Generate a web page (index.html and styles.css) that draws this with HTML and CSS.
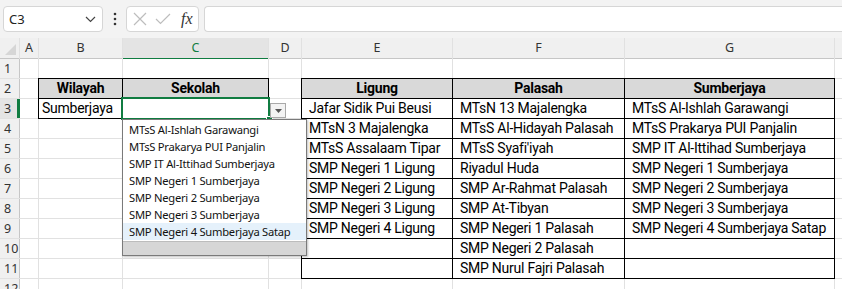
FILE: index.html
```html
<!DOCTYPE html>
<html lang="id">
<head>
    <meta charset="UTF-8">
    <title>Sekolah per Wilayah</title>
    <link rel="stylesheet" href="styles.css">
</head>
<body>
    <div class="toolbar">
        <div class="name-box">
            <span class="name-text">C3</span>
            <svg class="chevron" width="11" height="7" viewBox="0 0 11 7"><path d="M1 1 L5.5 5.5 L10 1" fill="none" stroke="#444" stroke-width="1.2"/></svg>
        </div>
        <svg class="dots" width="4" height="14" viewBox="0 0 4 14"><circle cx="2" cy="2" r="1.3"/><circle cx="2" cy="7" r="1.3"/><circle cx="2" cy="12" r="1.3"/></svg>
        <div class="fx-box">
            <svg width="14" height="14" viewBox="0 0 14 14"><path d="M1 1 L13 13 M13 1 L1 13" stroke="#bdbdbd" stroke-width="1.2" fill="none"/></svg>
            <svg width="16" height="12" viewBox="0 0 16 12"><path d="M1 6 L5.5 10.5 L15 1" stroke="#bdbdbd" stroke-width="1.2" fill="none"/></svg>
            <span class="fx">fx</span>
        </div>
        <div class="formula-input"></div>
    </div>

    <div class="sheet">
        <!-- column headers -->
        <div class="corner"></div>
        <div class="hd">A</div>
        <div class="hd">B</div>
        <div class="hd hd-active">C</div>
        <div class="hd">D</div>
        <div class="hd">E</div>
        <div class="hd">F</div>
        <div class="hd">G</div>
        <div class="hd"></div>

        <!-- row 1 -->
        <div class="rh">1</div>
        <div></div><div></div><div></div><div></div><div></div><div></div><div></div><div></div>

        <!-- row 2 -->
        <div class="rh">2</div>
        <div></div>
        <div class="cell box head">Wilayah</div>
        <div class="cell box head">Sekolah</div>
        <div></div>
        <div class="cell box head">Ligung</div>
        <div class="cell box head">Palasah</div>
        <div class="cell box head">Sumberjaya</div>
        <div></div>

        <!-- row 3 -->
        <div class="rh rh-active">3</div>
        <div></div>
        <div class="cell box">Sumberjaya</div>
        <div class="cell box selected">
            <div class="sel-frame"><span class="fill-handle"></span></div>
            <div class="drop-btn"><svg width="7" height="4" viewBox="0 0 7 4"><path d="M0 0 L7 0 L3.5 4 Z" fill="#555"/></svg></div>
            <div class="dropdown">
                <div class="opt">MTsS Al-Ishlah Garawangi</div>
                <div class="opt">MTsS Prakarya PUI Panjalin</div>
                <div class="opt">SMP IT Al-Ittihad Sumberjaya</div>
                <div class="opt">SMP Negeri 1 Sumberjaya</div>
                <div class="opt">SMP Negeri 2 Sumberjaya</div>
                <div class="opt">SMP Negeri 3 Sumberjaya</div>
                <div class="opt opt-hover">SMP Negeri 4 Sumberjaya Satap</div>
                <div class="drop-foot"></div>
            </div>
        </div>
        <div></div>
        <div class="cell box list">Jafar Sidik Pui Beusi</div>
        <div class="cell box list">MTsN 13 Majalengka</div>
        <div class="cell box list">MTsS Al-Ishlah Garawangi</div>
        <div></div>

        <!-- row 4 -->
        <div class="rh">4</div>
        <div></div><div></div><div></div><div></div>
        <div class="cell box list">MTsN 3 Majalengka</div>
        <div class="cell box list">MTsS Al-Hidayah Palasah</div>
        <div class="cell box list">MTsS Prakarya PUI Panjalin</div>
        <div></div>

        <!-- row 5 -->
        <div class="rh">5</div>
        <div></div><div></div><div></div><div></div>
        <div class="cell box list">MTsS Assalaam Tipar</div>
        <div class="cell box list">MTsS Syafi'iyah</div>
        <div class="cell box list">SMP IT Al-Ittihad Sumberjaya</div>
        <div></div>

        <!-- row 6 -->
        <div class="rh">6</div>
        <div></div><div></div><div></div><div></div>
        <div class="cell box list">SMP Negeri 1 Ligung</div>
        <div class="cell box list">Riyadul Huda</div>
        <div class="cell box list">SMP Negeri 1 Sumberjaya</div>
        <div></div>

        <!-- row 7 -->
        <div class="rh">7</div>
        <div></div><div></div><div></div><div></div>
        <div class="cell box list">SMP Negeri 2 Ligung</div>
        <div class="cell box list">SMP Ar-Rahmat Palasah</div>
        <div class="cell box list">SMP Negeri 2 Sumberjaya</div>
        <div></div>

        <!-- row 8 -->
        <div class="rh">8</div>
        <div></div><div></div><div></div><div></div>
        <div class="cell box list">SMP Negeri 3 Ligung</div>
        <div class="cell box list">SMP At-Tibyan</div>
        <div class="cell box list">SMP Negeri 3 Sumberjaya</div>
        <div></div>

        <!-- row 9 -->
        <div class="rh">9</div>
        <div></div><div></div><div></div><div></div>
        <div class="cell box list">SMP Negeri 4 Ligung</div>
        <div class="cell box list">SMP Negeri 1 Palasah</div>
        <div class="cell box list">SMP Negeri 4 Sumberjaya Satap</div>
        <div></div>

        <!-- row 10 -->
        <div class="rh">10</div>
        <div></div><div></div><div></div><div></div>
        <div class="cell box list"></div>
        <div class="cell box list">SMP Negeri 2 Palasah</div>
        <div class="cell box list"></div>
        <div></div>

        <!-- row 11 -->
        <div class="rh">11</div>
        <div></div><div></div><div></div><div></div>
        <div class="cell box list"></div>
        <div class="cell box list">SMP Nurul Fajri Palasah</div>
        <div class="cell box list"></div>
        <div></div>

        <!-- row 12 -->
        <div class="rh">12</div>
        <div></div><div></div><div></div><div></div><div></div><div></div><div></div><div></div>
    </div>
</body>
</html>
```

FILE: styles.css
```css
* {
    margin: 0;
    padding: 0;
    box-sizing: border-box;
}

html, body {
    height: 100%;
    overflow: hidden;
}

body {
    background-color: #fff;
    font-family: 'Noto Sans', 'Open Sans', sans-serif;
    color: #000;
}

/* formula bar */

.toolbar {
    height: 38px;
    display: flex;
    align-items: center;
    padding: 0 0 0 3px;
    background-color: #f3f3f3;
}

.name-box {
    width: 100px;
    height: 26px;
    background-color: #fff;
    border: 1px solid #d6d6d6;
    border-radius: 4px;
    display: flex;
    align-items: center;
    justify-content: space-between;
    padding: 0 6px 0 5px;
}

.name-text {
    font-size: 13px;
    color: #222;
}

.dots {
    fill: #333;
    margin: 0 9px 0 10px;
}

.fx-box {
    width: 73px;
    height: 26px;
    background-color: #fff;
    border: 1px solid #d6d6d6;
    border-radius: 4px;
    display: flex;
    align-items: center;
    gap: 8px;
    padding-left: 6px;
}

.fx {
    font-family: 'Liberation Serif', serif;
    font-style: italic;
    font-size: 16px;
    color: #333;
    margin-left: 2px;
}

.formula-input {
    flex: 1;
    height: 26px;
    margin-left: 5px;
    background-color: #fff;
    border: 1px solid #d6d6d6;
    border-right: none;
    border-radius: 4px 0 0 4px;
}

/* grid */

.sheet {
    display: grid;
    grid-template-columns: 19px 18px 83px 145px 32px 150px 171px 209px 1fr;
    grid-template-rows: 20px;
    grid-auto-rows: 19px;
    gap: 1px;
    background-color: #e1e1e1;
}

.sheet > div {
    background-color: #fff;
}

.corner {
    background-color: #f0f0f0 !important;
    position: relative;
    box-shadow: 0 1px 0 #c6c6c6;
}

.corner::after {
    content: "";
    position: absolute;
    right: 3px;
    bottom: 3px;
    border-left: 11px solid transparent;
    border-bottom: 11px solid #d6d6d6;
}

.hd {
    background-color: #f0f0f0 !important;
    font-size: 12.5px;
    color: #333;
    text-align: center;
    line-height: 20px;
    box-shadow: 0 1px 0 #c6c6c6;
}

.hd-active {
    background-color: #e4e4e4 !important;
    color: #107c41;
    box-shadow: 0 1px 0 #107c41, 0 2px 0 #107c41;
}

.rh {
    background-color: #f0f0f0 !important;
    font-size: 12.5px;
    color: #333;
    line-height: 19px;
    padding-left: 4px;
    box-shadow: 1px 0 0 #c6c6c6;
}

.rh-active {
    background-color: #e4e4e4 !important;
    box-shadow: 1px 0 0 #107c41;
    border-right: 2px solid #107c41;
}

.cell {
    font-family: Roboto, 'Noto Sans', sans-serif;
    font-size: 14px;
    letter-spacing: -0.25px;
    line-height: 19px;
    white-space: nowrap;
    padding-left: 3px;
}

.box {
    box-shadow: 0 0 0 1px #000;
}

.head {
    background-color: #d9d9d9 !important;
    font-weight: bold;
    text-align: center;
    padding-left: 0;
}

.list {
    padding-left: 7px;
}

/* active cell with validation list */

.selected {
    position: relative;
}

.sel-frame {
    position: absolute;
    left: -2px;
    top: -2px;
    right: -2px;
    bottom: -2px;
    border: 2px solid #107c41;
    z-index: 5;
}

.fill-handle {
    position: absolute;
    right: -5px;
    bottom: -5px;
    width: 7px;
    height: 7px;
    background-color: #107c41;
    border: 1px solid #fff;
}

.drop-btn {
    position: absolute;
    left: calc(100% + 2px);
    top: 4px;
    width: 16px;
    height: 15px;
    background-color: #f3f3f3;
    border: 1px solid #a9a9a9;
    display: flex;
    align-items: center;
    justify-content: center;
    z-index: 5;
}

.dropdown {
    position: absolute;
    left: -1px;
    top: 20px;
    width: 185px;
    height: 137px;
    background-color: #fff;
    border: 1px solid #7a7a7a;
    box-shadow: 1px 1px 2px rgba(0, 0, 0, 0.25);
    padding-top: 1px;
    z-index: 10;
    display: flex;
    flex-direction: column;
}

.opt {
    height: 17px;
    line-height: 17px;
    font-family: 'Noto Sans', sans-serif;
    font-size: 11.2px;
    color: #111;
    padding-left: 6px;
    white-space: nowrap;
}

.opt-hover {
    background-color: #e5f1fb;
}

.drop-foot {
    flex: 1;
    margin-top: 1px;
    background-color: #d6d6d6;
    border-top: 1px solid #bcbcbc;
}
```
